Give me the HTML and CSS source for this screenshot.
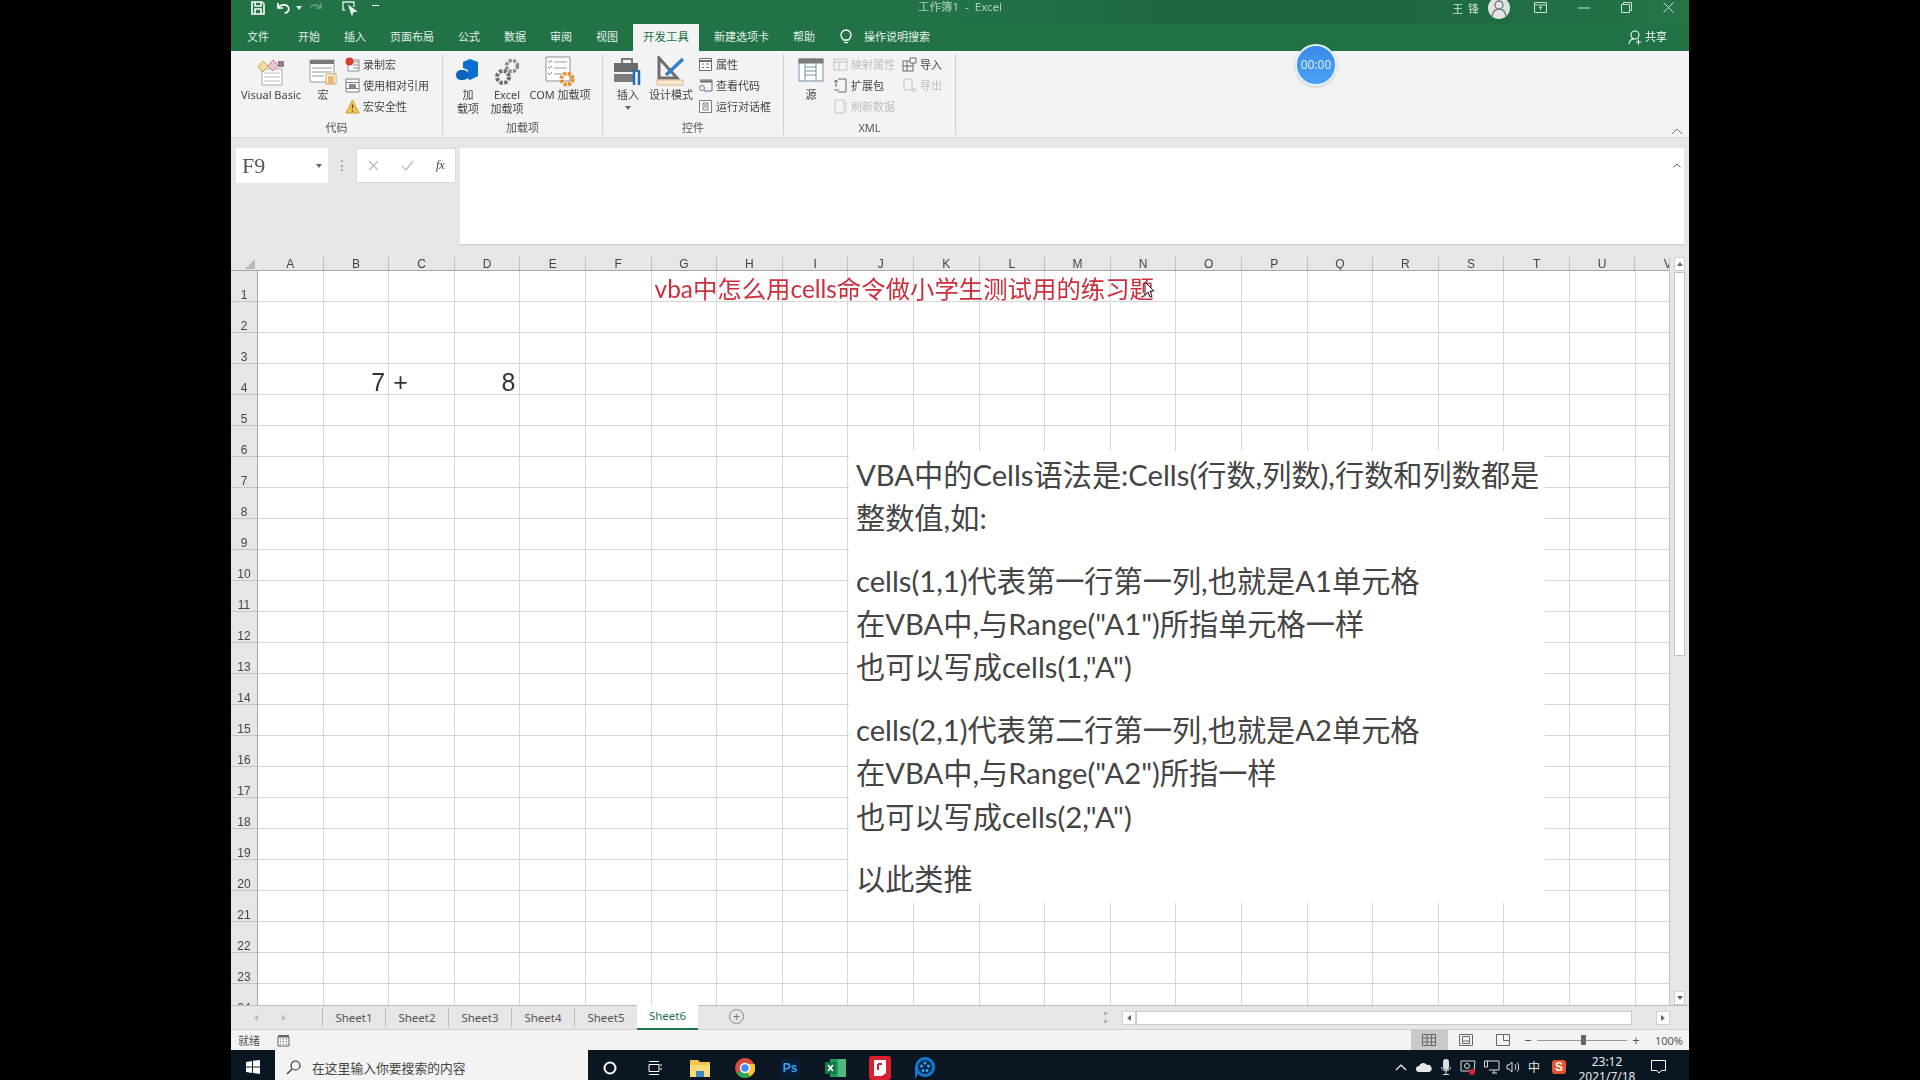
FILE: index.html
```html
<!DOCTYPE html>
<html lang="zh-CN">
<head>
<meta charset="utf-8">
<title>工作簿1 - Excel</title>
<link rel="stylesheet" href="styles.css">
</head>
<body>
<div class="window">
  <header class="titlebar">
    <div class="qat">
      <svg class="qi q-save" width="16" height="16" viewBox="0 0 16 16" fill="none" stroke="#fff" stroke-width="1.6"><path d="M2 2h10l2 2v10H2z"/><path d="M5 2v4h6V2M5 14V9h6v5"/></svg>
      <svg class="qi q-undo" width="16" height="14" viewBox="0 0 16 14" fill="none" stroke="#fff" stroke-width="1.7"><path d="M2 2v5h5"/><path d="M2.5 6.5C5 3 11 3 12.5 6.500 13.500 9 11.500 12 8.500 12"/></svg>
      <span class="caret w"></span>
      <svg class="qi q-redo" width="16" height="14" viewBox="0 0 16 14" fill="none" stroke="#6d9d82" stroke-width="1.500"><path d="M14 2v5H9"/><path d="M13.500 6.500C11 3 5 3 3.500 6.500"/></svg>
      <svg class="qi q-touch" width="18" height="16" viewBox="0 0 18 16" fill="none" stroke="#e8f0eb" stroke-width="1.300"><path d="M4 10H2V2h11v5"/><path d="M8 6l7 5-3 .5-1 3z" fill="#e8f0eb"/></svg>
      <span class="qat-drop"></span>
    </div>
    <div class="doc-title">工作簿1&nbsp; -&nbsp; Excel</div>
    <div class="winctl">
      <span class="user">王 锋</span>
      <span class="avatar"><svg width="22" height="22" viewBox="0 0 22 22" fill="none" stroke="#777" stroke-width="1.300"><circle cx="11" cy="8" r="4"/><path d="M4 19c1-5 4-7 7-7s6 2 7 7"/></svg></span>
      <svg class="wc wc-disp" width="13" height="11" viewBox="0 0 13 11" fill="none" stroke="#cfe0d6"><path d="M.5.5h12v10H.5zM.5 3h12M6.500 8V4.500M5 6l1.500-1.500L8 6"/></svg>
      <svg class="wc wc-min" width="12" height="2" viewBox="0 0 12 2"><path d="M0 1h12" stroke="#cfe0d6"/></svg>
      <svg class="wc wc-max" width="11" height="11" viewBox="0 0 11 11" fill="none" stroke="#cfe0d6"><path d="M.5 2.500h8v8h-8zM2.500 2.500v-2h8v8h-2"/></svg>
      <svg class="wc wc-close" width="11" height="11" viewBox="0 0 11 11" stroke="#cfe0d6"><path d="M.5.5l10 10M10.500.5l-10 10"/></svg>
    </div>
  </header>

  <nav class="tabs">
    <span class="tab tab-first">文件</span>
    <span class="tab">开始</span>
    <span class="tab">插入</span>
    <span class="tab">页面布局</span>
    <span class="tab">公式</span>
    <span class="tab">数据</span>
    <span class="tab">审阅</span>
    <span class="tab">视图</span>
    <span class="tab tab-active">开发工具</span>
    <span class="tab tab-new">新建选项卡</span>
    <span class="tab">帮助</span>
    <svg class="bulb" width="12" height="16" viewBox="0 0 12 16" fill="none" stroke="#fff" stroke-width="1.300"><path d="M3.500 11C2 9.500 1 8 1 6a5 5 0 0 1 10 0c0 2-1 3.500-2.500 5z"/><path d="M4 13.500h4"/></svg>
    <span class="tab tab-search">操作说明搜索</span>
    <span class="share"><svg width="14" height="15" viewBox="0 0 14 15" fill="none" stroke="#fff" stroke-width="1.100"><circle cx="7" cy="5" r="4"/><path d="M1 14c.5-3 2.500-5 5-5M8 12h5M10.500 9.500v5"/></svg>共享</span>
  </nav>

  <section class="ribbon">
    <div class="group g-code">
      <div class="gbody">
        <div class="big w62"><span class="bi"><svg width="30" height="30" viewBox="0 0 30 30"><path d="M6 12h20v16H6z" fill="#fff" stroke="#b8a58c"/><path d="M8 16h16M8 20h16M8 24h16" stroke="#bdbdbd"/><path d="M2 10l5-6 5 5-5 6z" fill="#f6dca0" stroke="#c9a458"/><path d="M12 9l5-6 5 5-5 6z" fill="#ecc4d2" stroke="#c97d9c"/><path d="M22 4h6v6h-6z" fill="#8f7e92"/></svg></span><span class="lb">Visual Basic</span></div>
        <div class="big w30"><span class="bi"><svg width="28" height="30" viewBox="0 0 28 30"><path d="M1 3h24v22H1z" fill="#fff" stroke="#9a9a9a"/><path d="M1 3h24v4H1z" fill="#7b7b7b"/><path d="M3 11h20M3 15h20M3 19h12" stroke="#9a9a9a"/><path d="M17 17h10v10H17z" fill="#fff" stroke="#c8a060"/><path d="M19 19h6v8h-6z" fill="#f2b56a"/></svg></span><span class="lb">宏</span></div>
        <div class="col">
          <div class="sm"><svg width="15" height="15" viewBox="0 0 15 15"><path d="M3 3h11v11H3z" fill="#fff" stroke="#8a8a8a"/><path d="M8 5h6M8 8h6M8 11h6" stroke="#8a8a8a"/><circle cx="4.500" cy="4.500" r="4" fill="#d5402e"/></svg>录制宏</div>
          <div class="sm"><svg width="15" height="15" viewBox="0 0 15 15"><path d="M1 1h13v13H1z" fill="#fff" stroke="#7d7d7d"/><path d="M1 4.500h13M1 10.500h13" stroke="#7d7d7d"/><path d="M4 6h7v4H4z" fill="#8a8a8a"/></svg>使用相对引用</div>
          <div class="sm"><svg width="15" height="15" viewBox="0 0 15 15"><path d="M7.500 1L14 14H1z" fill="#f5c45a" stroke="#d59b2a"/><path d="M7.500 5.500v4M7.500 11v1.500" stroke="#5a4a20" stroke-width="1.300"/></svg>宏安全性</div>
        </div>
      </div>
      <div class="gname">代码</div>
    </div>

    <div class="group g-addin">
      <div class="gbody">
        <div class="big w32"><span class="bi"><svg width="26" height="28" viewBox="0 0 26 28"><path d="M8 4l7-3 8 3v14l-8 4-2-1V12L8 10z" fill="#0b6fd1"/><path d="M7 12c4 0 7 2 7 5s-3 5-7 5-6-2-6-5 2-5 6-5z" fill="#0d63bd"/></svg></span><span class="lb">加<br>载项</span></div>
        <div class="big w38"><span class="bi"><svg width="28" height="30" viewBox="0 0 28 30"><circle cx="19" cy="9" r="5.500" fill="none" stroke="#8a8a8a" stroke-width="3.500" stroke-dasharray="3 1.400"/><circle cx="10" cy="20" r="6" fill="none" stroke="#6f6f6f" stroke-width="4" stroke-dasharray="3.200 1.500"/></svg></span><span class="lb">Excel<br>加载项</span></div>
        <div class="big w60"><span class="bi"><svg width="32" height="32" viewBox="0 0 32 32"><path d="M2 1h24v24H2z" fill="#fff" stroke="#8f8f8f"/><path d="M10 6h13M10 12h13M10 18h8" stroke="#9a9a9a"/><path d="M4 5l1.500 1.500L8 4M4 11l1.500 1.500L8 10M4 17l1.500 1.500L8 16" fill="none" stroke="#6f8f6f"/><circle cx="23" cy="23" r="5.500" fill="none" stroke="#e8912c" stroke-width="4" stroke-dasharray="3 1.300"/></svg></span><span class="lb">COM 加载项</span></div>
      </div>
      <div class="gname">加载项</div>
    </div>

    <div class="group g-ctrl">
      <div class="gbody">
        <div class="big w32"><span class="bi"><svg width="30" height="30" viewBox="0 0 30 30"><path d="M9 6V2h10v4" fill="none" stroke="#7b7b7b" stroke-width="2"/><path d="M1 6h24v9H1z" fill="#6b6b6b"/><path d="M1 17h20v8H1z" fill="#7b7b7b"/><path d="M21 13v15M26 13v15" stroke="#1f6fb8" stroke-width="2.500"/></svg></span><span class="lb">插入</span><span class="caret"></span></div>
        <div class="big w44"><span class="bi"><svg width="34" height="32" viewBox="0 0 34 32"><path d="M5 2v20h18z" fill="none" stroke="#6f6f6f" stroke-width="3"/><path d="M12 19L29 3" stroke="#2f7fc9" stroke-width="3.500"/><path d="M3 24h26v5H3z" fill="#fbe7cf" stroke="#d9b58a"/></svg></span><span class="lb">设计模式</span></div>
        <div class="col">
          <div class="sm"><svg width="15" height="15" viewBox="0 0 15 15" fill="#fff" stroke="#6e6e6e"><path d="M1.500 1.500h12v12h-12z"/><path d="M1.500 4h12" stroke-width="2"/><path d="M4 7h2M8 7h3M4 10.500h2M8 10.500h3"/></svg>属性</div>
          <div class="sm"><svg width="15" height="15" viewBox="0 0 15 15" fill="none" stroke="#6e6e6e"><path d="M2 2h12v11H7"/><path d="M2 3.500h12" stroke-width="2"/><circle cx="4" cy="10" r="2.500" stroke="#4f86b8"/><path d="M6 12l2 2" stroke="#4f86b8"/></svg>查看代码</div>
          <div class="sm"><svg width="15" height="15" viewBox="0 0 15 15" fill="#fff" stroke="#7a7a7a"><path d="M1.500 1.500h12v12h-12z"/><path d="M5 4h5v7H5z"/><path d="M6 6h3M6 8h3"/></svg>运行对话框</div>
        </div>
      </div>
      <div class="gname">控件</div>
    </div>

    <div class="group g-xml">
      <div class="gbody">
        <div class="big w28"><span class="bi"><svg width="26" height="30" viewBox="0 0 26 30" fill="#fff" stroke="#6f8fa8"><path d="M1 2h24v22H1z"/><path d="M1 2h24v4H1z" fill="#7b7b7b" stroke="#7b7b7b"/><path d="M7 6v18M18 6v18M7 10h11M7 14h11M7 18h11"/></svg></span><span class="lb">源</span></div>
        <div class="col w61">
          <div class="sm off"><svg width="15" height="15" viewBox="0 0 15 15" fill="none" stroke="#c4c4c4"><path d="M1 2h13v11H1zM1 5h13M6 5v8"/></svg>映射属性</div>
          <div class="sm"><svg width="15" height="15" viewBox="0 0 15 15" fill="none" stroke="#666"><path d="M5 1h8v13H5M3 2v7M1 4l2-2 2 2M1 12h5"/></svg>扩展包</div>
          <div class="sm off"><svg width="15" height="15" viewBox="0 0 15 15" fill="none" stroke="#c4c4c4"><path d="M2 1h9v13H2zM13 3v7M13 12v1"/></svg>刷新数据</div>
        </div>
        <div class="col">
          <div class="sm"><svg width="15" height="15" viewBox="0 0 15 15" fill="none" stroke="#666"><path d="M1 4h10v10H1zM5 4v10M1 9h10"/><path d="M8 1h6v5H8z" fill="#fff"/></svg>导入</div>
          <div class="sm off"><svg width="15" height="15" viewBox="0 0 15 15" fill="none" stroke="#c4c4c4"><path d="M2 1h8v11H2zM9 9l4 4M13 10v3h-3"/></svg>导出</div>
        </div>
      </div>
      <div class="gname">XML</div>
    </div>
    <svg class="collapse" width="12" height="7" viewBox="0 0 12 7" fill="none" stroke="#777"><path d="M1 6l5-5 5 5"/></svg>
  </section>

  <section class="fbar">
    <div class="namebox"><span>F9</span><span class="caret"></span></div>
    <div class="fdots"><i></i></div>
    <div class="fbtns">
      <svg width="11" height="11" viewBox="0 0 11 11" stroke="#c2c2c2" stroke-width="1.500"><path d="M1 1l9 9M10 1l-9 9"/></svg>
      <svg width="13" height="11" viewBox="0 0 13 11" fill="none" stroke="#c2c2c2" stroke-width="1.500"><path d="M1 6l4 4 7-9"/></svg>
      <span class="fx">fx</span>
    </div>
    <div class="finput"><svg width="8" height="5" viewBox="0 0 8 5" fill="none" stroke="#666"><path d="M.5 4.500L4 1l3.500 3.500"/></svg></div>
  </section>

  <section class="sheet">
    <div class="colhead">
      <span class="corner"><i></i></span>
      <div class="cols">
        <span>A</span><span>B</span><span>C</span><span>D</span><span>E</span><span>F</span><span>G</span><span>H</span><span>I</span><span>J</span><span>K</span><span>L</span><span>M</span><span>N</span><span>O</span><span>P</span><span>Q</span><span>R</span><span>S</span><span>T</span><span>U</span><span>V</span>
      </div>
    </div>
    <div class="sheetbody">
      <div class="rows">
        <span>1</span><span>2</span><span>3</span><span>4</span><span>5</span><span>6</span><span>7</span><span>8</span><span>9</span><span>10</span><span>11</span><span>12</span><span>13</span><span>14</span><span>15</span><span>16</span><span>17</span><span>18</span><span>19</span><span>20</span><span>21</span><span>22</span><span>23</span><span>24</span>
      </div>
      <div class="cells">
        <div class="cell c-title">vba中怎么用cells命令做小学生测试用的练习题</div>
        <div class="cell c-7">7</div>
        <div class="cell c-plus">+</div>
        <div class="cell c-8">8</div>
      </div>
      <div class="vscroll">
        <span class="vbtn"><i class="up"></i></span>
        <span class="vthumb"></span>
        <span class="vbtn vdown"><i class="down"></i></span>
      </div>
    </div>
    <div class="note">
      <p>VBA中的Cells语法是:Cells(行数,列数),行数和列数都是<br>整数值,如:</p>
      <p>cells(1,1)代表第一行第一列,也就是A1单元格<br>在VBA中,与Range("A1")所指单元格一样<br>也可以写成cells(1,"A")</p>
      <p>cells(2,1)代表第二行第一列,也就是A2单元格<br>在VBA中,与Range("A2")所指一样<br>也可以写成cells(2,"A")</p>
      <p>以此类推</p>
    </div>
    <svg class="pointer" width="11" height="17" viewBox="0 0 11 17"><path d="M1 1v13l3-3 2 5 2-1-2-5h4z" fill="#fff" stroke="#222"/></svg>
  </section>

  <section class="sheetbar">
    <div class="navs"><i class="left"></i><i class="right"></i></div>
    <span class="stab">Sheet1</span>
    <span class="stab">Sheet2</span>
    <span class="stab">Sheet3</span>
    <span class="stab">Sheet4</span>
    <span class="stab">Sheet5</span>
    <span class="stab stab-active">Sheet6</span>
    <span class="addsheet">+</span>
    <span class="splitter"></span>
    <div class="hscroll">
      <span class="hbtn"><i class="left"></i></span>
      <span class="hthumb"></span>
      <span class="hbtn hbtn-r"><i class="right"></i></span>
    </div>
  </section>

  <footer class="status">
    <span class="ready">就绪</span>
    <svg width="13" height="13" viewBox="0 0 13 13" fill="none" stroke="#666"><path d="M1 3h11v9H1z"/><path d="M1 2h11" stroke-width="2"/><path d="M3 5h1M6 5h1M9 5h1M3 7.500h1M6 7.500h1M9 7.500h1M3 10h1M6 10h1M9 10h1"/></svg>
    <div class="views">
      <span class="view view-on"><svg width="14" height="12" viewBox="0 0 14 12" fill="none" stroke="#666"><path d="M.5.500h13v11H.5zM.5 4h13M.5 8h13M5 .5v11M9.500.5v11"/></svg></span>
      <span class="view"><svg width="14" height="12" viewBox="0 0 14 12" fill="none" stroke="#666"><path d="M.5.500h13v11H.5zM3.500 2.500h7v7h-7zM3.500 7h7"/></svg></span>
      <span class="view"><svg width="14" height="12" viewBox="0 0 14 12" fill="none" stroke="#666"><path d="M.5.500h13v11H.5zM7.500.5v6h6"/></svg></span>
    </div>
    <div class="zoom">
      <span class="zsign">−</span>
      <span class="ztrack"><i></i></span>
      <span class="zsign">+</span>
      <span class="zpct">100%</span>
    </div>
  </footer>

  <footer class="taskbar">
    <span class="start"><svg width="14" height="14" viewBox="0 0 14 14" fill="#fff"><path d="M0 2l6-1v5.500H0zM7 .8L14 0v6.500H7zM0 7.500h6V13l-6-1zM7 7.500h7V14l-7-1z"/></svg></span>
    <div class="search"><svg width="15" height="15" viewBox="0 0 15 15" fill="none" stroke="#333" stroke-width="1.200"><circle cx="9.500" cy="5.500" r="4.500"/><path d="M6 9l-5 5"/></svg>在这里输入你要搜索的内容</div>
    <div class="apps">
      <span class="app"><svg width="14" height="14" viewBox="0 0 14 14" fill="none" stroke="#fff" stroke-width="2"><circle cx="7" cy="7" r="5.500"/></svg></span>
      <span class="app"><svg width="14" height="14" viewBox="0 0 14 14" fill="none" stroke="#fff"><path d="M1 .5h10M1 13.500h10M1 3.500h10v7H1zM13 3v2M13 7v2"/></svg></span>
      <span class="app"><svg width="20" height="18" viewBox="0 0 20 18"><path d="M0 1h8l2 2h10v15H0z" fill="#f4c54d"/><path d="M0 6h20v12H0z" fill="#f9dc7a"/><path d="M6 12h8v6H6z" fill="#3f87c5"/></svg></span>
      <span class="app"><svg width="20" height="20" viewBox="0 0 20 20"><circle cx="10" cy="10" r="10" fill="#dd4b3e"/><path d="M10 10L1.500 15A10 10 0 0 0 15 18.700z" fill="#2da84e"/><path d="M10 10l5 8.700A10 10 0 0 0 19.500 6H10z" fill="#f7c52d"/><circle cx="10" cy="10" r="4.500" fill="#4a8af0" stroke="#fff" stroke-width="1.500"/></svg></span>
      <span class="app"><span class="ps">Ps</span></span>
      <span class="app"><svg width="22" height="20" viewBox="0 0 22 20"><path d="M6 1h16v18H6z" fill="#1e9a58"/><path d="M14 1h8v18h-8z" fill="#4cb97f"/><path d="M1 4h11v12H1z" fill="#117a43"/><path d="M4 7l5 6M9 7l-5 6" stroke="#fff" stroke-width="1.600"/></svg></span>
      <span class="app"><svg width="22" height="24" viewBox="0 0 22 24"><rect x="0" y="0" width="22" height="24" rx="3" fill="#d9202f"/><path d="M5 4h12v13l-4 3H5z" fill="#fff"/><path d="M9 8h4M9 8v6" stroke="#d9202f" stroke-width="2"/></svg></span>
      <span class="app"><svg width="22" height="24" viewBox="0 0 22 24"><path d="M11 1a10 10 0 1 1-7 17l-3 5V11A10 10 0 0 1 11 1z" fill="#1477d2"/><circle cx="11" cy="11" r="7" fill="#0b2b4f"/><g fill="#35a5f0"><circle cx="11" cy="7" r="1.500"/><circle cx="7.500" cy="10" r="1.500"/><circle cx="14.500" cy="10" r="1.500"/><circle cx="9" cy="14.500" r="1.500"/><circle cx="13" cy="14.500" r="1.500"/></g></svg></span>
    </div>
    <div class="tray">
      <svg class="t-up" width="12" height="7" viewBox="0 0 12 7" fill="none" stroke="#fff" stroke-width="1.200"><path d="M1 6l5-5 5 5"/></svg>
      <svg class="t-cloud" width="16" height="10" viewBox="0 0 16 10" fill="#e8e8e8"><path d="M3 10a3 3 0 0 1 0-6 4.500 4.500 0 0 1 8-1 3.500 3.500 0 0 1 2 7z"/></svg>
      <svg class="t-mic" width="10" height="16" viewBox="0 0 10 16"><rect x="2" y="0" width="6" height="11" rx="3" fill="#ddd"/><path d="M.5 8c0 5 9 5 9 0M5 12v3M2 15.500h6" fill="none" stroke="#ddd"/></svg>
      <svg class="t-rec" width="16" height="16" viewBox="0 0 16 16" fill="none" stroke="#ddd"><path d="M1 2h14l-1 10H1z"/><circle cx="7" cy="7" r="2.500"/><circle cx="12" cy="13" r="3" fill="#e0202f" stroke="none"/></svg>
      <svg class="t-net" width="16" height="14" viewBox="0 0 16 14" fill="none" stroke="#ddd"><path d="M3 1h12v9H5M8 13h5M10 10v3M.5 1h3v6h-3z"/></svg>
      <svg class="t-vol" width="15" height="12" viewBox="0 0 15 12" fill="none" stroke="#ddd"><path d="M1 4h2l3-3v10L3 8H1zM9 3c1 2 1 4 0 6M11.500 1.500c1.500 3 1.500 6 0 9"/></svg>
      <span class="t-ime">中</span>
      <span class="t-sogou">S</span>
      <span class="clock"><b>23:12</b><b>2021/7/18</b></span>
      <svg class="t-note" width="15" height="14" viewBox="0 0 15 14" fill="none" stroke="#fff"><path d="M.5.500h14v10h-4L8 13l-2-2.500H.5z"/></svg>
    </div>
  </footer>

  <div class="timer">00:00</div>
</div>
</body>
</html>
```

FILE: styles.css
```css
* { box-sizing: border-box; }
html, body { margin: 0; height: 100%; }
body {
  background: #000;
  display: flex;
  justify-content: center;
  overflow: hidden;
  font-family: "Noto Sans", "Noto Sans CJK SC", sans-serif;
  color: #444;
}
svg { display: block; flex: none; }
i { font-style: normal; display: block; }

.window {
  width: 1458px;
  height: 1080px;
  display: flex;
  flex-direction: column;
  position: relative;
  overflow: hidden;
  filter: blur(.4px);
}

/* title bar */
.titlebar {
  height: 24px;
  background: linear-gradient(90deg, #217346 0, #217346 50%, #1c663d 68%, #1d683e 80%, #247548 100%);
  display: flex;
  align-items: flex-start;
  color: #d5e3da;
  font-size: 11px;
  position: relative;
}
.qat { display: flex; align-items: center; height: 15px; padding-left: 19px; width: 600px; }
.q-undo { margin-left: 10px; }
.q-redo { margin-left: 5px; }
.q-touch { margin-left: 18px; }
.qat-drop { width: 7px; height: 5px; margin-left: 13px; border-top: 1px solid #fff; border-bottom: 3px solid transparent; }
.caret { width: 0; height: 0; border: 3px solid transparent; border-top: 4px solid #666; border-bottom: 0; display: block; }
.caret.w { border-top-color: #e4ede7; margin-left: 4px; }
.doc-title { line-height: 13px; margin-left: 87px; opacity: .8; white-space: nowrap; font-size: 11.5px; }
.winctl { margin-left: auto; display: flex; align-items: center; height: 15px; padding-right: 15px; }
.user { letter-spacing: 1px; }
.avatar { width: 22px; height: 22px; border-radius: 50%; background: #e3e3e3; margin: 0 0 0 8px; overflow: hidden; }
.wc-disp { margin-left: 24px; }
.wc-min { margin-left: 31px; }
.wc-max { margin-left: 31px; }
.wc-close { margin-left: 31px; }

/* tabs */
.tabs {
  height: 27px;
  background: #217346;
  display: flex;
  align-items: center;
  color: #e6efe9;
  font-size: 11px;
  padding: 0 0 1px 16px;
  gap: 24px;
  line-height: 14px;
}
.tab { white-space: nowrap; }
.tab-first { margin-right: 5px; }
.tab-active {
  background: #f3f3f3;
  color: #217346;
  align-self: stretch;
  font-size: 11.5px;
  margin: 0 -10px -1px -9px;
  padding: 0 10px;
  line-height: 26px;
}
.tab-new { margin-left: 1px; }
.bulb { margin-left: 1px; margin-right: -12px; }
.share { margin-left: auto; margin-right: 22px; display: flex; align-items: center; gap: 3px; color: #fff; }

/* ribbon */
.ribbon {
  height: 86px;
  background: #f3f3f3;
  display: flex;
  position: relative;
  font-size: 11px;
  line-height: 14px;
  color: #444;
}
.group {
  display: flex;
  flex-direction: column;
  border-right: 1px solid #d0d0d0;
  margin: 3px 0 2px;
}
.g-code { width: 212px; padding-left: 9px; }
.g-addin { width: 160px; padding-left: 9px; }
.g-ctrl { width: 181px; padding-left: 9px; }
.g-xml { width: 172px; padding-left: 13px; }
.gbody { height: 67px; display: flex; }
.g-code .gbody { gap: 6px; }
.g-addin .gbody { gap: 4px; }
.g-ctrl .gbody { gap: 5px; }
.g-xml .gbody { gap: 7px; }
.gname { text-align: center; line-height: 14px; color: #555; }
.g-code .gname, .g-addin .gname, .g-ctrl .gname { margin-left: -9px; }
.g-xml .gname { margin-left: -13px; }
.big { display: flex; flex-direction: column; align-items: center; text-align: center; white-space: nowrap; padding-top: 1px; }
.bi { height: 33px; display: flex; align-items: center; justify-content: center; }
.lb { display: block; }
.big .caret { margin-top: 4px; }
.w28 { width: 28px; }
.w30 { width: 30px; }
.w32 { width: 32px; }
.w38 { width: 38px; }
.w44 { width: 44px; }
.w60 { width: 60px; }
.w61 { width: 61px; }
.w62 { width: 62px; }
.col { display: flex; flex-direction: column; margin-left: 1px; }
.g-ctrl .col { margin-left: 0; }
.sm { height: 21px; display: flex; align-items: center; gap: 3px; white-space: nowrap; }
.off { color: #bdbdbd; }
.collapse { position: absolute; right: 6px; bottom: 2px; }

/* formula bar */
.fbar {
  height: 120px;
  background: #e6e6e6;
  border-top: 1px solid #d8d8d8;
  padding: 10px 5px 13px 5px;
  display: flex;
  align-items: flex-start;
}
.namebox {
  width: 92px;
  height: 35px;
  background: #fff;
  display: flex;
  align-items: center;
  justify-content: space-between;
  padding: 0 6px;
  font: 22px "Liberation Serif", serif;
  color: #555;
}
.fdots { width: 28px; height: 35px; display: flex; align-items: center; justify-content: center; }
.fdots i { width: 2px; height: 11px; background: repeating-linear-gradient(180deg, #a8a8a8 0 2px, transparent 2px 4.500px); }
.fbtns {
  width: 100px;
  height: 35px;
  background: #fff;
  border: 1px solid #d9d9d9;
  display: flex;
  align-items: center;
  gap: 22px;
  padding-left: 11px;
}
.fx { font: italic 12px "Liberation Serif", serif; color: #444; }
.finput {
  margin-left: 4px;
  flex: 1;
  height: 97px;
  background: #fff;
  border-bottom: 1px solid #ccc;
  display: flex;
  justify-content: flex-end;
  padding: 15px 3px 0 0;
}

/* sheet */
.sheet { height: 748px; display: flex; flex-direction: column; position: relative; background: #fff; overflow: hidden; }
.colhead { height: 14px; display: flex; background: #e6e6e6; border-bottom: 1px solid #a8a8a8; flex: none; }
.corner { width: 27px; flex: none; position: relative; }
.corner i { position: absolute; right: 3px; bottom: 1px; width: 0; height: 0; border-left: 10px solid transparent; border-bottom: 10px solid #b9b9b9; }
.cols { display: grid; grid-template-columns: repeat(22, 65.6px); width: 1411px; overflow: hidden; flex: none; font: 12px/14px "Liberation Sans", sans-serif; }
.cols span { text-align: center; color: #444; border-right: 1px solid #bdbdbd; }
.sheetbody { flex: 1; display: flex; min-height: 0; }
.rows { width: 27px; flex: none; background: #e6e6e6; border-right: 1px solid #a8a8a8; display: grid; grid-auto-rows: 31px; font: 12px "Liberation Sans", sans-serif; color: #444; overflow: hidden; }
.rows span { display: flex; align-items: flex-end; justify-content: center; border-bottom: 1px solid #c6c6c6; line-height: 11px; }
.cells {
  width: 1411px;
  flex: none;
  display: grid;
  grid-template-columns: repeat(22, 65.6px);
  grid-auto-rows: 31px;
  overflow: hidden;
  background:
    repeating-linear-gradient(90deg, transparent 0 64.6px, #d6d6d6 64.6px 65.6px),
    repeating-linear-gradient(180deg, transparent 0 30px, #d6d6d6 30px 31px);
}
.cell { font-family: "Liberation Sans", "Noto Sans CJK SC", sans-serif; white-space: nowrap; display: flex; align-items: flex-end; min-width: 0; }
.c-title { grid-column: 7; grid-row: 1; color: #cc2f3b; font: 24.4px/26px "Lato", "Noto Sans CJK SC", sans-serif; padding-left: 3px; }
.c-7, .c-8, .c-plus { grid-row: 4; font-size: 25px; color: #333; line-height: 26px; }
.c-7 { grid-column: 2; justify-content: flex-end; padding-right: 4px; }
.c-plus { grid-column: 3; padding-left: 4px; }
.c-8 { grid-column: 4; justify-content: flex-end; padding-right: 5px; }

.vscroll { flex: 1; background: #e6e6e6; display: flex; flex-direction: column; margin-top: -14px; position: relative; padding: 0 4px; border-left: 1px solid #c6c6c6; }
.vbtn { height: 14px; display: flex; align-items: center; justify-content: center; background: #fff; border: 1px solid #d0d0d0; flex: none; }
.vdown { margin-top: auto; }
.vthumb { margin-top: 1px; height: 384px; background: #fff; border: 1px solid #c4c4c4; flex: none; }
.up { border: 3px solid transparent; border-bottom: 4px solid #666; border-top: 0; }
.down { border: 3px solid transparent; border-top: 4px solid #666; border-bottom: 0; }
.left { border: 3px solid transparent; border-right: 4px solid #666; border-left: 0; }
.right { border: 3px solid transparent; border-left: 4px solid #666; border-right: 0; }

.note {
  position: absolute;
  left: 618px;
  top: 194px;
  width: 696px;
  height: 452px;
  background: #fff;
  padding: 2px 0 0 7px;
  color: #444;
  font: 29.2px/43.3px "Lato", "Noto Sans CJK SC", sans-serif;
  white-space: nowrap;
}
.note p { margin: 0 0 19.300px; }
.pointer { position: absolute; left: 913px; top: 24px; }

/* sheet tabs */
.sheetbar {
  height: 25px;
  background: #e6e6e6;
  border-top: 1px solid #bcbcbc;
  border-bottom: 1px solid #cfcfcf;
  display: flex;
  align-items: stretch;
  font-size: 11.5px;
  color: #555;
}
.navs { width: 91px; display: flex; align-items: center; gap: 24px; padding-left: 23px; flex: none; opacity: .35; }
.stab { width: 63px; border-left: 1px solid #bdbdbd; text-align: center; line-height: 19px; margin: 2px 0; }
.stab-active { background: #fff; color: #217346; margin: -1px 0; line-height: 22px; border: 0; border-bottom: 2px solid #217346; width: 61px; }
.addsheet { width: 15px; height: 15px; margin: 3px 0 0 31px; border: 1px solid #888; border-radius: 50%; line-height: 12px; text-align: center; font-size: 13px; color: #777; flex: none; }
.splitter { width: 4px; height: 11px; margin: 6px 0 0 360px; border-left: 3px dotted #b5b5b5; flex: none; }
.hscroll { display: flex; align-items: center; margin-left: 14px; flex: 1; padding-right: 19px; }
.hbtn { width: 14px; height: 14px; display: flex; align-items: center; justify-content: center; background: #fff; border: 1px solid #d0d0d0; flex: none; }
.hbtn-r { margin-left: 24px; }
.hthumb { flex: 1; height: 14px; background: #fff; border: 1px solid #c9c9c9; }

/* status bar */
.status {
  height: 20px;
  background: #f3f3f3;
  display: flex;
  align-items: center;
  padding: 0 6px 0 7px;
  font-size: 11px;
  color: #555;
  gap: 17px;
}
.views { margin-left: auto; display: flex; align-self: stretch; }
.view { width: 37px; display: flex; align-items: center; justify-content: center; }
.view-on { background: #c8c8c8; }
.zoom { display: flex; align-items: center; gap: 3px; margin-left: -17px; }
.zsign { width: 12px; text-align: center; font-size: 13px; }
.ztrack { width: 90px; height: 1px; background: #999; position: relative; }
.ztrack i { position: absolute; left: 44px; top: -5px; width: 5px; height: 10px; background: #666; }
.zpct { margin-left: 10px; }

/* taskbar */
.taskbar {
  height: 30px;
  background: #0a1722;
  display: flex;
  align-items: stretch;
  color: #fff;
}
.start { width: 44px; display: flex; align-items: center; justify-content: center; padding-top: 4px; }
.search {
  width: 313px;
  background: #f3f3f3;
  color: #444;
  font-size: 12.8px;
  display: flex;
  align-items: center;
  gap: 11px;
  padding: 4px 0 0 11px;
  white-space: nowrap;
}
.apps { display: flex; align-items: center; padding-top: 5px; overflow: hidden; }
.app { width: 44.900px; height: 26px; display: flex; align-items: center; justify-content: center; }
.ps { width: 20px; height: 20px; background: #071d33; color: #33a3f4; font: 700 12px/20px "Liberation Sans", sans-serif; text-align: center; }
.tray { margin-left: auto; display: flex; align-items: center; padding: 4px 23px 0 0; color: #e8e8e8; font-size: 12px; overflow: hidden; }
.t-cloud { margin-left: 9px; }
.t-mic { margin-left: 9px; }
.t-rec { margin-left: 9px; }
.t-net { margin-left: 8px; }
.t-vol { margin-left: 6px; }
.t-ime { margin-left: 7px; }
.t-sogou { margin-left: 12px; width: 14px; height: 14px; border-radius: 3px; background: #e8542a; color: #fff; font: 700 12px/14px "Liberation Sans", sans-serif; text-align: center; }
.clock { width: 70px; margin: -4px 0 0 6px; align-self: flex-start; display: flex; flex-direction: column; align-items: center; line-height: 15px; padding-top: 4px; }
.clock b { font-weight: 400; white-space: nowrap; }
.t-note { margin-left: 9px; }

/* recorder badge */
.timer {
  position: absolute;
  left: 1064px;
  top: 44px;
  width: 42px;
  height: 42px;
  border-radius: 50%;
  background: linear-gradient(180deg, #3a8ae8, #4aa2f4);
  border: 2px solid #e4f0fb;
  box-shadow: 0 1px 3px rgba(0,0,0,.2);
  color: #dcecff;
  font-size: 12px;
  line-height: 38px;
  text-align: center;
}
```
